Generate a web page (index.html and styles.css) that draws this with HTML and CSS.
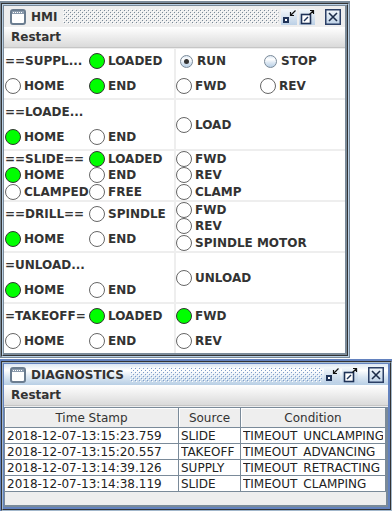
FILE: index.html
```html
<!DOCTYPE html>
<html lang="en">
<head>
    <meta charset="UTF-8">
    <meta name="viewport" content="width=device-width, initial-scale=1.0">
    <title>HMI</title>
    <link rel="stylesheet" href="styles.css">
</head>
<body>
    <div class="desktop">

        <!-- HMI window (not focused) -->
        <section class="frame idle">
            <div class="frame-edge">
                <div class="frame-body">
                    <header class="titlebar">
                        <svg class="frame-icon" viewBox="0 0 16 16">
                            <rect x="1" y="1" width="14" height="14" rx="2" fill="#fff" stroke="#6b7d90" stroke-width="2"/>
                            <rect x="2" y="2" width="12" height="3" fill="#8a9aac"/>
                            <path d="M3 3.5h1M5 3.5h1M7 3.5h1M9 3.5h1M11 3.5h1" stroke="#fff"/>
                        </svg>
                        <span class="title">HMI</span>
                        <svg class="bumps">
                            <defs>
                                <pattern id="bumps-idle" width="4" height="4" patternUnits="userSpaceOnUse">
                                    <rect width="1" height="1" fill="#fff"/>
                                    <rect x="2" y="2" width="1" height="1" fill="#fff"/>
                                    <rect x="1" y="1" width="1" height="1" fill="#7a8a99"/>
                                    <rect x="3" y="3" width="1" height="1" fill="#7a8a99"/>
                                </pattern>
                            </defs>
                            <rect width="100%" height="100%" fill="url(#bumps-idle)"/>
                        </svg>
                        <svg class="tbtn" viewBox="0 0 16 16">
                            <rect x="2" y="8" width="6" height="6" fill="#1f3358"/>
                            <rect x="4" y="10" width="2" height="2" fill="#fff"/>
                            <path d="M14.5 1.5L9.5 6.5M9.5 3v3.5H13" fill="none" stroke="#111" stroke-width="1.2"/>
                        </svg>
                        <svg class="tbtn" viewBox="0 0 16 16">
                            <rect x="2.5" y="5.5" width="9" height="9" fill="#fff" stroke="#1f3358" stroke-width="1.6"/>
                            <path d="M5 12L9 8" stroke="#1f3358" stroke-width="1.4"/>
                            <path d="M10.5 5.5L14.5 1.5M11 1.5h3.5V5" fill="none" stroke="#111" stroke-width="1.2"/>
                        </svg>
                        <svg class="tbtn close" viewBox="0 0 16 16">
                            <rect x="0.75" y="0.75" width="14.5" height="14.5" fill="none" stroke="#2b3f66" stroke-width="1.5"/>
                            <path d="M4 4l8 8M12 4l-8 8" stroke="#1b2b48" stroke-width="1.6"/>
                        </svg>
                    </header>
                    <div class="menubar"><span class="menu">Restart</span></div>

                    <div class="stations">
                        <!-- supply -->
                        <div class="cell cols">
                            <span class="tag">==SUPPL...</span>
                            <span class="opt"><span class="led on"></span>LOADED</span>
                            <span class="opt"><span class="led"></span>HOME</span>
                            <span class="opt"><span class="led on"></span>END</span>
                        </div>
                        <div class="cell cols side">
                            <span class="opt metal"><span class="radio checked"></span>RUN</span>
                            <span class="opt metal"><span class="radio"></span>STOP</span>
                            <span class="opt"><span class="led"></span>FWD</span>
                            <span class="opt"><span class="led"></span>REV</span>
                        </div>

                        <!-- loader -->
                        <div class="cell cols">
                            <span class="tag wide">==LOADE...</span>
                            <span class="opt"><span class="led on"></span>HOME</span>
                            <span class="opt"><span class="led"></span>END</span>
                        </div>
                        <div class="cell side">
                            <span class="opt"><span class="led"></span>LOAD</span>
                        </div>

                        <!-- slide -->
                        <div class="cell cols">
                            <span class="tag">==SLIDE==</span>
                            <span class="opt"><span class="led on"></span>LOADED</span>
                            <span class="opt"><span class="led on"></span>HOME</span>
                            <span class="opt"><span class="led"></span>END</span>
                            <span class="opt"><span class="led"></span>CLAMPED</span>
                            <span class="opt"><span class="led"></span>FREE</span>
                        </div>
                        <div class="cell side">
                            <span class="opt"><span class="led"></span>FWD</span>
                            <span class="opt"><span class="led"></span>REV</span>
                            <span class="opt"><span class="led"></span>CLAMP</span>
                        </div>

                        <!-- drill -->
                        <div class="cell cols">
                            <span class="tag">==DRILL==</span>
                            <span class="opt"><span class="led"></span>SPINDLE</span>
                            <span class="opt"><span class="led on"></span>HOME</span>
                            <span class="opt"><span class="led"></span>END</span>
                        </div>
                        <div class="cell side">
                            <span class="opt"><span class="led"></span>FWD</span>
                            <span class="opt"><span class="led"></span>REV</span>
                            <span class="opt"><span class="led"></span>SPINDLE MOTOR</span>
                        </div>

                        <!-- unloader -->
                        <div class="cell cols">
                            <span class="tag wide">=UNLOAD...</span>
                            <span class="opt"><span class="led on"></span>HOME</span>
                            <span class="opt"><span class="led"></span>END</span>
                        </div>
                        <div class="cell side">
                            <span class="opt"><span class="led"></span>UNLOAD</span>
                        </div>

                        <!-- takeoff -->
                        <div class="cell cols">
                            <span class="tag">=TAKEOFF=</span>
                            <span class="opt"><span class="led on"></span>LOADED</span>
                            <span class="opt"><span class="led"></span>HOME</span>
                            <span class="opt"><span class="led"></span>END</span>
                        </div>
                        <div class="cell side">
                            <span class="opt"><span class="led on"></span>FWD</span>
                            <span class="opt"><span class="led"></span>REV</span>
                        </div>
                    </div>
                </div>
            </div>
        </section>

        <!-- Diagnostics window (focused) -->
        <section class="frame active diag">
            <div class="frame-edge">
                <div class="frame-body">
                    <header class="titlebar">
                        <svg class="frame-icon" viewBox="0 0 16 16">
                            <rect x="1" y="1" width="14" height="14" rx="2" fill="#fff" stroke="#6b7d90" stroke-width="2"/>
                            <rect x="2" y="2" width="12" height="3" fill="#8a9aac"/>
                            <path d="M3 3.5h1M5 3.5h1M7 3.5h1M9 3.5h1M11 3.5h1" stroke="#fff"/>
                        </svg>
                        <span class="title">DIAGNOSTICS</span>
                        <svg class="bumps">
                            <defs>
                                <pattern id="bumps-active" width="4" height="4" patternUnits="userSpaceOnUse">
                                    <rect width="1" height="1" fill="#fff"/>
                                    <rect x="2" y="2" width="1" height="1" fill="#fff"/>
                                    <rect x="1" y="1" width="1" height="1" fill="#7d9cc9"/>
                                    <rect x="3" y="3" width="1" height="1" fill="#7d9cc9"/>
                                </pattern>
                            </defs>
                            <rect width="100%" height="100%" fill="url(#bumps-active)"/>
                        </svg>
                        <svg class="tbtn" viewBox="0 0 16 16">
                            <rect x="2" y="8" width="6" height="6" fill="#1f3358"/>
                            <rect x="4" y="10" width="2" height="2" fill="#fff"/>
                            <path d="M14.5 1.5L9.5 6.5M9.5 3v3.5H13" fill="none" stroke="#111" stroke-width="1.2"/>
                        </svg>
                        <svg class="tbtn" viewBox="0 0 16 16">
                            <rect x="2.5" y="5.5" width="9" height="9" fill="#fff" stroke="#1f3358" stroke-width="1.6"/>
                            <path d="M5 12L9 8" stroke="#1f3358" stroke-width="1.4"/>
                            <path d="M10.5 5.5L14.5 1.5M11 1.5h3.5V5" fill="none" stroke="#111" stroke-width="1.2"/>
                        </svg>
                        <svg class="tbtn close" viewBox="0 0 16 16">
                            <rect x="0.75" y="0.75" width="14.5" height="14.5" fill="none" stroke="#2b3f66" stroke-width="1.5"/>
                            <path d="M4 4l8 8M12 4l-8 8" stroke="#1b2b48" stroke-width="1.6"/>
                        </svg>
                    </header>
                    <div class="menubar"><span class="menu">Restart</span></div>

                    <div class="pane">
                        <div class="scroll">
                            <table class="log">
                                <colgroup>
                                    <col class="col-time">
                                    <col class="col-source">
                                    <col>
                                </colgroup>
                                <thead>
                                    <tr><th>Time Stamp</th><th>Source</th><th>Condition</th></tr>
                                </thead>
                                <tbody>
                                    <tr><td><span>2018-12-07-13:15:23.759</span></td><td><span>SLIDE</span></td><td><span>TIMEOUT_UNCLAMPING</span></td></tr>
                                    <tr><td><span>2018-12-07-13:15:20.557</span></td><td><span>TAKEOFF</span></td><td><span>TIMEOUT_ADVANCING</span></td></tr>
                                    <tr><td><span>2018-12-07-13:14:39.126</span></td><td><span>SUPPLY</span></td><td><span>TIMEOUT_RETRACTING</span></td></tr>
                                    <tr><td><span>2018-12-07-13:14:38.119</span></td><td><span>SLIDE</span></td><td><span>TIMEOUT_CLAMPING</span></td></tr>
                                </tbody>
                            </table>
                        </div>
                    </div>
                </div>
            </div>
        </section>

    </div>
</body>
</html>
```

FILE: styles.css
```css
* {
    margin: 0;
    padding: 0;
    box-sizing: border-box;
}

body {
    background: #fff;
    color: #333;
    font-family: "DejaVu Sans", "Liberation Sans", sans-serif;
    font-size: 12px;
}

.desktop {
    width: 392px;
    height: 511px;
    overflow: hidden;
}

/* internal frame border: bg, shadow line, highlight line */
.frame {
    margin-left: -1px;
    border-style: solid;
    border-width: 2px 1px 1px 2px;
}

.frame-edge {
    border: 1px solid;
}

.frame-body {
    border: 1px solid;
    padding: 1px 2px 2px 1px;
}

.idle {
    width: 351px;
    margin-top: 1px;
    border-color: #7a8a99;
}

.idle .frame-edge {
    border-color: #333 #b8cfe5 #b8cfe5 #333;
}

.idle .frame-body {
    border-color: #b8cfe5 #333 #333 #b8cfe5;
    background: #7a8a99;
}

.active {
    width: 394px;
    margin-top: 1px;
    border-color: #6382bf;
}

.active .frame-edge {
    border-color: #333 #a3b8cc #a3b8cc #333;
}

.active .frame-body {
    border-color: #a3b8cc #333 #333 #a3b8cc;
    background: #6382bf;
}

/* title bar */
.titlebar {
    display: flex;
    align-items: center;
    height: 21px;
    padding: 0 4px 0 6px;
}

.idle .titlebar {
    background: #eeeeee;
}

.active .titlebar {
    background: linear-gradient(#dde8f3, #fff 30%, #dde8f3 60%, #b8cfe5);
}

.frame-icon {
    flex: none;
    width: 16px;
    height: 16px;
}

.title {
    margin: 0 6px 0 5px;
    font-weight: bold;
    white-space: nowrap;
}

.bumps {
    flex: 1;
    min-width: 0;
    height: 15px;
    margin-right: 2px;
}

.tbtn {
    flex: none;
    width: 16px;
    height: 16px;
    background: linear-gradient(#f4f8fb, #bcd0e6);
}

.tbtn + .tbtn {
    margin-left: 2px;
}

.tbtn.close {
    margin-left: 10px;
}

/* menu bar */
.menubar {
    display: flex;
    align-items: center;
    height: 21px;
    padding-left: 7px;
    background: linear-gradient(#fff, #dadada);
    border-bottom: 1px solid #c6c6c6;
}

.menu {
    font-weight: bold;
}

/* HMI station grid */
.stations {
    display: grid;
    grid-template-columns: 170px 169px;
    grid-auto-rows: 49px;
    gap: 2px;
    padding-top: 1px;
    background: #eeeeee;
    font-weight: bold;
}

.cell {
    display: grid;
    grid-auto-rows: 1fr;
    align-items: center;
    padding-left: 1px;
    background: #fff;
}

.cell.side {
    padding-left: 0;
}

.cols {
    grid-template-columns: 84px 1fr;
}

.tag {
    white-space: nowrap;
}

.tag.wide {
    grid-column: span 2;
}

.opt {
    display: flex;
    align-items: center;
    gap: 3px;
    white-space: nowrap;
}

.opt.metal {
    gap: 4px;
    padding-left: 4px;
}

.led {
    flex: none;
    width: 16px;
    height: 16px;
    border: 1px solid #666;
    border-radius: 50%;
    background: #fff;
}

.led.on {
    border-color: #333;
    background: #00ff00;
}

.radio {
    flex: none;
    display: grid;
    place-items: center;
    width: 13px;
    height: 13px;
    border: 1px solid #7a8a99;
    border-radius: 50%;
    background: linear-gradient(#dde8f3, #fff 30%, #dde8f3 60%, #b8cfe5);
}

.radio.checked::after {
    content: "";
    width: 5px;
    height: 5px;
    border-radius: 50%;
    background: #333;
}

/* diagnostics table */
.pane {
    padding-top: 1px;
    background: #eeeeee;
}

.scroll {
    height: 100px;
    border-style: solid;
    border-width: 1px 2px 2px 1px;
    border-color: #7a8a99;
    background: #eeeeee;
}

.log {
    width: 100%;
    table-layout: fixed;
    border-collapse: separate;
    border-spacing: 0;
    color: #222;
}

.col-time {
    width: 174px;
}

.col-source {
    width: 62px;
}

.log th {
    height: 20px;
    padding: 0;
    font-weight: normal;
    color: #333;
    background: #eeeeee;
    border-right: 1px solid #7a8a99;
    border-bottom: 1px solid #7a8a99;
    box-shadow: inset 1px 1px #fff;
}

.log td {
    height: 16px;
    padding: 1px 2px 0;
    vertical-align: top;
    background: #fff;
    border-right: 1px solid #7a8a99;
    border-bottom: 1px solid #7a8a99;
}

/* row text is clipped just above the grid line, like the Swing table */
.log td span {
    display: block;
    height: 13px;
    line-height: 14px;
    overflow: hidden;
    white-space: nowrap;
}
```
